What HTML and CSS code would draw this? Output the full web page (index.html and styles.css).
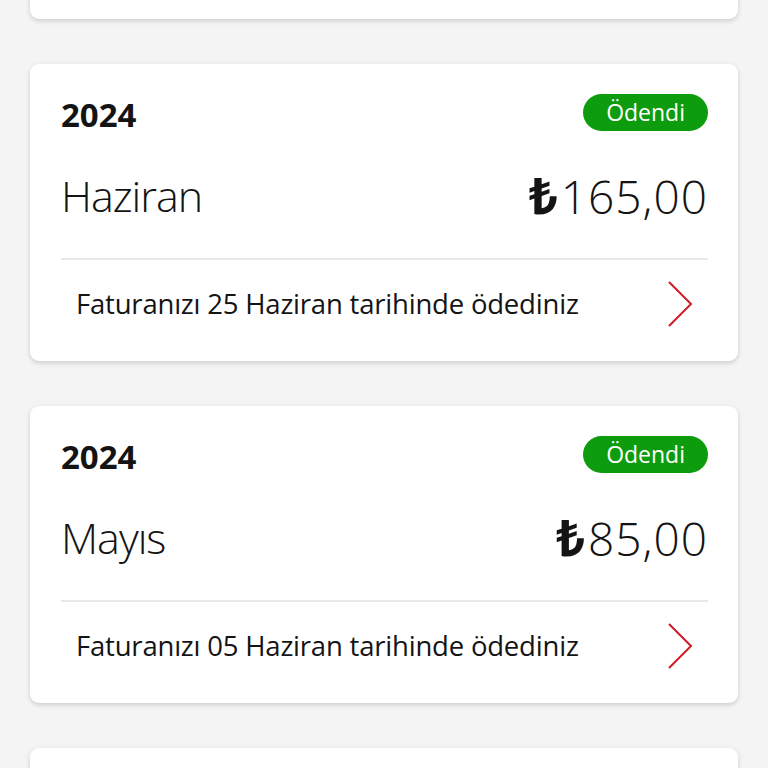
FILE: index.html
```html
<!DOCTYPE html>
<html lang="tr">
<head>
    <meta charset="UTF-8">
    <meta name="viewport" content="width=device-width, initial-scale=1.0">
    <title>Faturalarım</title>
    <link rel="stylesheet" href="styles.css">
</head>
<body>
    <div class="bill-list">
        <!-- önceki kartın alt kısmı, yukarı kaydırılmış -->
        <div class="bill-card bill-card-cut"></div>

        <div class="bill-card">
            <div class="bill-head">
                <span class="bill-year">2024</span>
                <span class="bill-status">Ödendi</span>
            </div>
            <div class="bill-main">
                <span class="bill-month">Haziran</span>
                <span class="bill-amount"><span class="lira">₺</span>165,00</span>
            </div>
            <div class="bill-foot">
                <span class="bill-note">Faturanızı 25 Haziran tarihinde ödediniz</span>
                <svg class="chevron" width="26" height="46" viewBox="0 0 26 46"><path d="M2 1 L24 23 L2 45" fill="none" stroke="#d01a26" stroke-width="2"/></svg>
            </div>
        </div>

        <div class="bill-card">
            <div class="bill-head">
                <span class="bill-year">2024</span>
                <span class="bill-status">Ödendi</span>
            </div>
            <div class="bill-main">
                <span class="bill-month">Mayıs</span>
                <span class="bill-amount"><span class="lira">₺</span>85,00</span>
            </div>
            <div class="bill-foot">
                <span class="bill-note">Faturanızı 05 Haziran tarihinde ödediniz</span>
                <svg class="chevron" width="26" height="46" viewBox="0 0 26 46"><path d="M2 1 L24 23 L2 45" fill="none" stroke="#d01a26" stroke-width="2"/></svg>
            </div>
        </div>

        <div class="bill-card bill-card-cut"></div>
    </div>
</body>
</html>
```

FILE: styles.css
```css
html, body {
    margin: 0;
    height: 100%;
    overflow: hidden;
}

body {
    font-family: 'Open Sans', 'Noto Sans', sans-serif;
    background-color: #f4f4f4;
    color: #141414;
}

.bill-list {
    display: flex;
    flex-direction: column;
    gap: 45px;
    padding: 0 30px;
    margin-top: -278px;
}

.bill-card {
    background-color: #ffffff;
    border-radius: 9px;
    height: 297px;
    flex-shrink: 0;
    box-sizing: border-box;
    padding: 30px 30px 0 31px;
    box-shadow: 0 2px 5px rgba(0, 0, 0, 0.16);
    display: flex;
    flex-direction: column;
}

.bill-head {
    display: flex;
    justify-content: space-between;
    align-items: center;
    height: 37px;
}

.bill-year {
    font-size: 33px;
    font-weight: 700;
    padding-top: 4px;
}

.bill-status {
    background-color: #0d9c0d;
    color: #ffffff;
    font-size: 23px;
    line-height: 37px;
    height: 37px;
    padding: 0 23px;
    border-radius: 19px;
}

.bill-main {
    display: flex;
    justify-content: space-between;
    align-items: center;
    height: 56px;
    margin-top: 36px;
    padding-bottom: 35px;
    border-bottom: 2px solid #e9e9e9;
}

.bill-month {
    font-size: 43px;
    font-weight: 300;
    letter-spacing: -1px;
}

.bill-amount {
    font-size: 46px;
    font-weight: 300;
    letter-spacing: 1px;
}

.lira {
    font-weight: 700;
    font-size: 50px;
    margin-right: 2px;
}

.bill-foot {
    display: flex;
    justify-content: space-between;
    align-items: center;
    padding: 0 15px;
    flex: 1;
    padding-bottom: 14px;
}

.bill-note {
    font-size: 27.5px;
    letter-spacing: -0.2px;
}

.chevron {
    display: block;
}
```
